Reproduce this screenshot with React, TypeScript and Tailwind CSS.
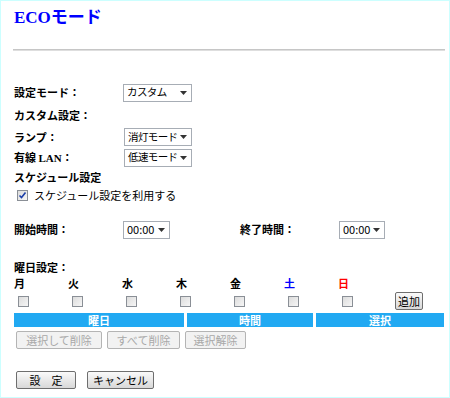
import { memo } from "react";

const jp = { fontFamily: '"Noto Sans CJK JP", "Noto Sans", sans-serif' };

const Select = memo(({ value, w, latin }: { value: string; w: string; latin?: boolean }) => {
  return (
    <div
      className={`${w} h-[18px] border border-[#a7adb5] bg-white flex items-center justify-between pl-[3px] pr-[4px] leading-none text-black whitespace-nowrap overflow-hidden`}
    >
      <span className={latin ? "text-[11px]" : "text-[10.5px] tracking-[-0.6px]"}>{value}</span>
      <svg className="shrink-0" width="7" height="4" viewBox="0 0 7 4">
        <path d="M0 0h7L3.5 4z" fill="#333" />
      </svg>
    </div>
  );
});

const Box = memo(({ checked }: { checked?: boolean }) => {
  return (
    <div className="w-[11px] h-[11px] border border-[#8a8f96] bg-gradient-to-br from-[#dcdcdc] to-[#f6f6f6] flex items-center justify-center">
      {checked && (
        <svg width="9" height="9" viewBox="0 0 9 9">
          <path d="M1.5 4.5l2 2 4-5" stroke="#1c3fa8" strokeWidth="1.6" fill="none" />
        </svg>
      )}
    </div>
  );
});

const Btn = memo(({ label, w, disabled }: { label: string; w: string; disabled?: boolean }) => {
  return (
    <div
      className={`${w} h-[18px] rounded-[2px] border flex items-center justify-center text-[11px] leading-none whitespace-nowrap ${
        disabled
          ? "border-[#b4b4b4] bg-[#f2f2f2] text-[#a8a8a8]"
          : "border-[#6e6e6e] bg-gradient-to-b from-[#fafafa] to-[#d8d8d8] text-black"
      }`}
    >
      {label}
    </div>
  );
});

export default function App() {
  const days = [
    { d: "月", c: "text-black" },
    { d: "火", c: "text-black" },
    { d: "水", c: "text-black" },
    { d: "木", c: "text-black" },
    { d: "金", c: "text-black" },
    { d: "土", c: "text-[#0000ff]" },
    { d: "日", c: "text-[#ff0000]" },
  ];
  return (
    <div
      className="w-[450px] h-[398px] border border-[#ccffff] bg-white text-[11px] text-black overflow-hidden whitespace-nowrap"
      style={jp}
    >
      <div className="pl-[12px] pr-[4px]">
        <div
          className="mt-[6px] h-[20px] flex items-center pl-[1px] text-[17px] font-bold text-[#0000ff] leading-none"
          style={{ fontFamily: '"Liberation Serif", "Noto Sans CJK JP", serif' }}
        >
          ECOモード
        </div>
        <div className="mt-[22px] h-[2px] bg-[#c6c6c6] border-b border-[#dedede]" />

        <div className="pl-[1px]">
          <div className="mt-[32px] h-[19px] flex items-center">
            <span className="w-[109px] font-bold">設定モード：</span>
            <Select value="カスタム" w="w-[69px]" />
          </div>
          <div className="h-[25px] flex items-center pt-[2px] font-bold">カスタム設定：</div>
          <div className="h-[20px] flex items-center">
            <span className="w-[110px] font-bold">ランプ：</span>
            <Select value="消灯モード" w="w-[68px]" />
          </div>
          <div className="mt-[1px] h-[19px] flex items-center">
            <span className="w-[110px] font-bold">
              有線 <span style={{ fontFamily: '"Liberation Serif", serif' }}>LAN</span>：
            </span>
            <Select value="低速モード" w="w-[68px]" />
          </div>
          <div className="h-[20px] flex items-center font-bold">スケジュール設定</div>
          <div className="h-[16px] flex items-center pl-[3px] gap-[6px]">
            <Box checked />
            <span>スケジュール設定を利用する</span>
          </div>

          <div className="mt-[17px] h-[19px] flex items-center">
            <span className="w-[109px] font-bold">開始時間：</span>
            <Select value="00:00" w="w-[47px]" latin />
            <span className="ml-[70px] w-[99px] font-bold">終了時間：</span>
            <Select value="00:00" w="w-[46px]" latin />
          </div>

          <div className="mt-[20px] h-[17px] flex items-center font-bold">曜日設定：</div>
          <div className="h-[14px] flex items-center">
            {days.map((x) => (
              <span key={x.d} className={`w-[54px] font-bold ${x.c}`}>
                {x.d}
              </span>
            ))}
          </div>
          <div className="mt-[2px] h-[18px] flex items-center">
            {days.map((x) => (
              <div key={x.d} className="w-[54px] pl-[4px]">
                <Box />
              </div>
            ))}
            <div className="ml-[3px]">
              <Btn label="追加" w="w-[28px]" />
            </div>
          </div>

          <div className="mt-[3px] h-[14px] flex gap-[3px] text-white font-bold leading-none pr-[1px]">
            <div className="w-[170px] bg-[#21a9f2] flex items-center justify-center">曜日</div>
            <div className="w-[126px] bg-[#21a9f2] flex items-center justify-center">時間</div>
            <div className="flex-1 bg-[#21a9f2] flex items-center justify-center">選択</div>
          </div>

          <div className="mt-[4px] flex gap-[5px] pl-[2px]">
            <Btn label="選択して削除" w="w-[86px]" disabled />
            <Btn label="すべて削除" w="w-[73px]" disabled />
            <Btn label="選択解除" w="w-[61px]" disabled />
          </div>

          <div className="mt-[22px] flex gap-[11px] pl-[2px]">
            <Btn label="設　定" w="w-[60px]" />
            <Btn label="キャンセル" w="w-[67px]" />
          </div>
        </div>
      </div>
    </div>
  );
}
